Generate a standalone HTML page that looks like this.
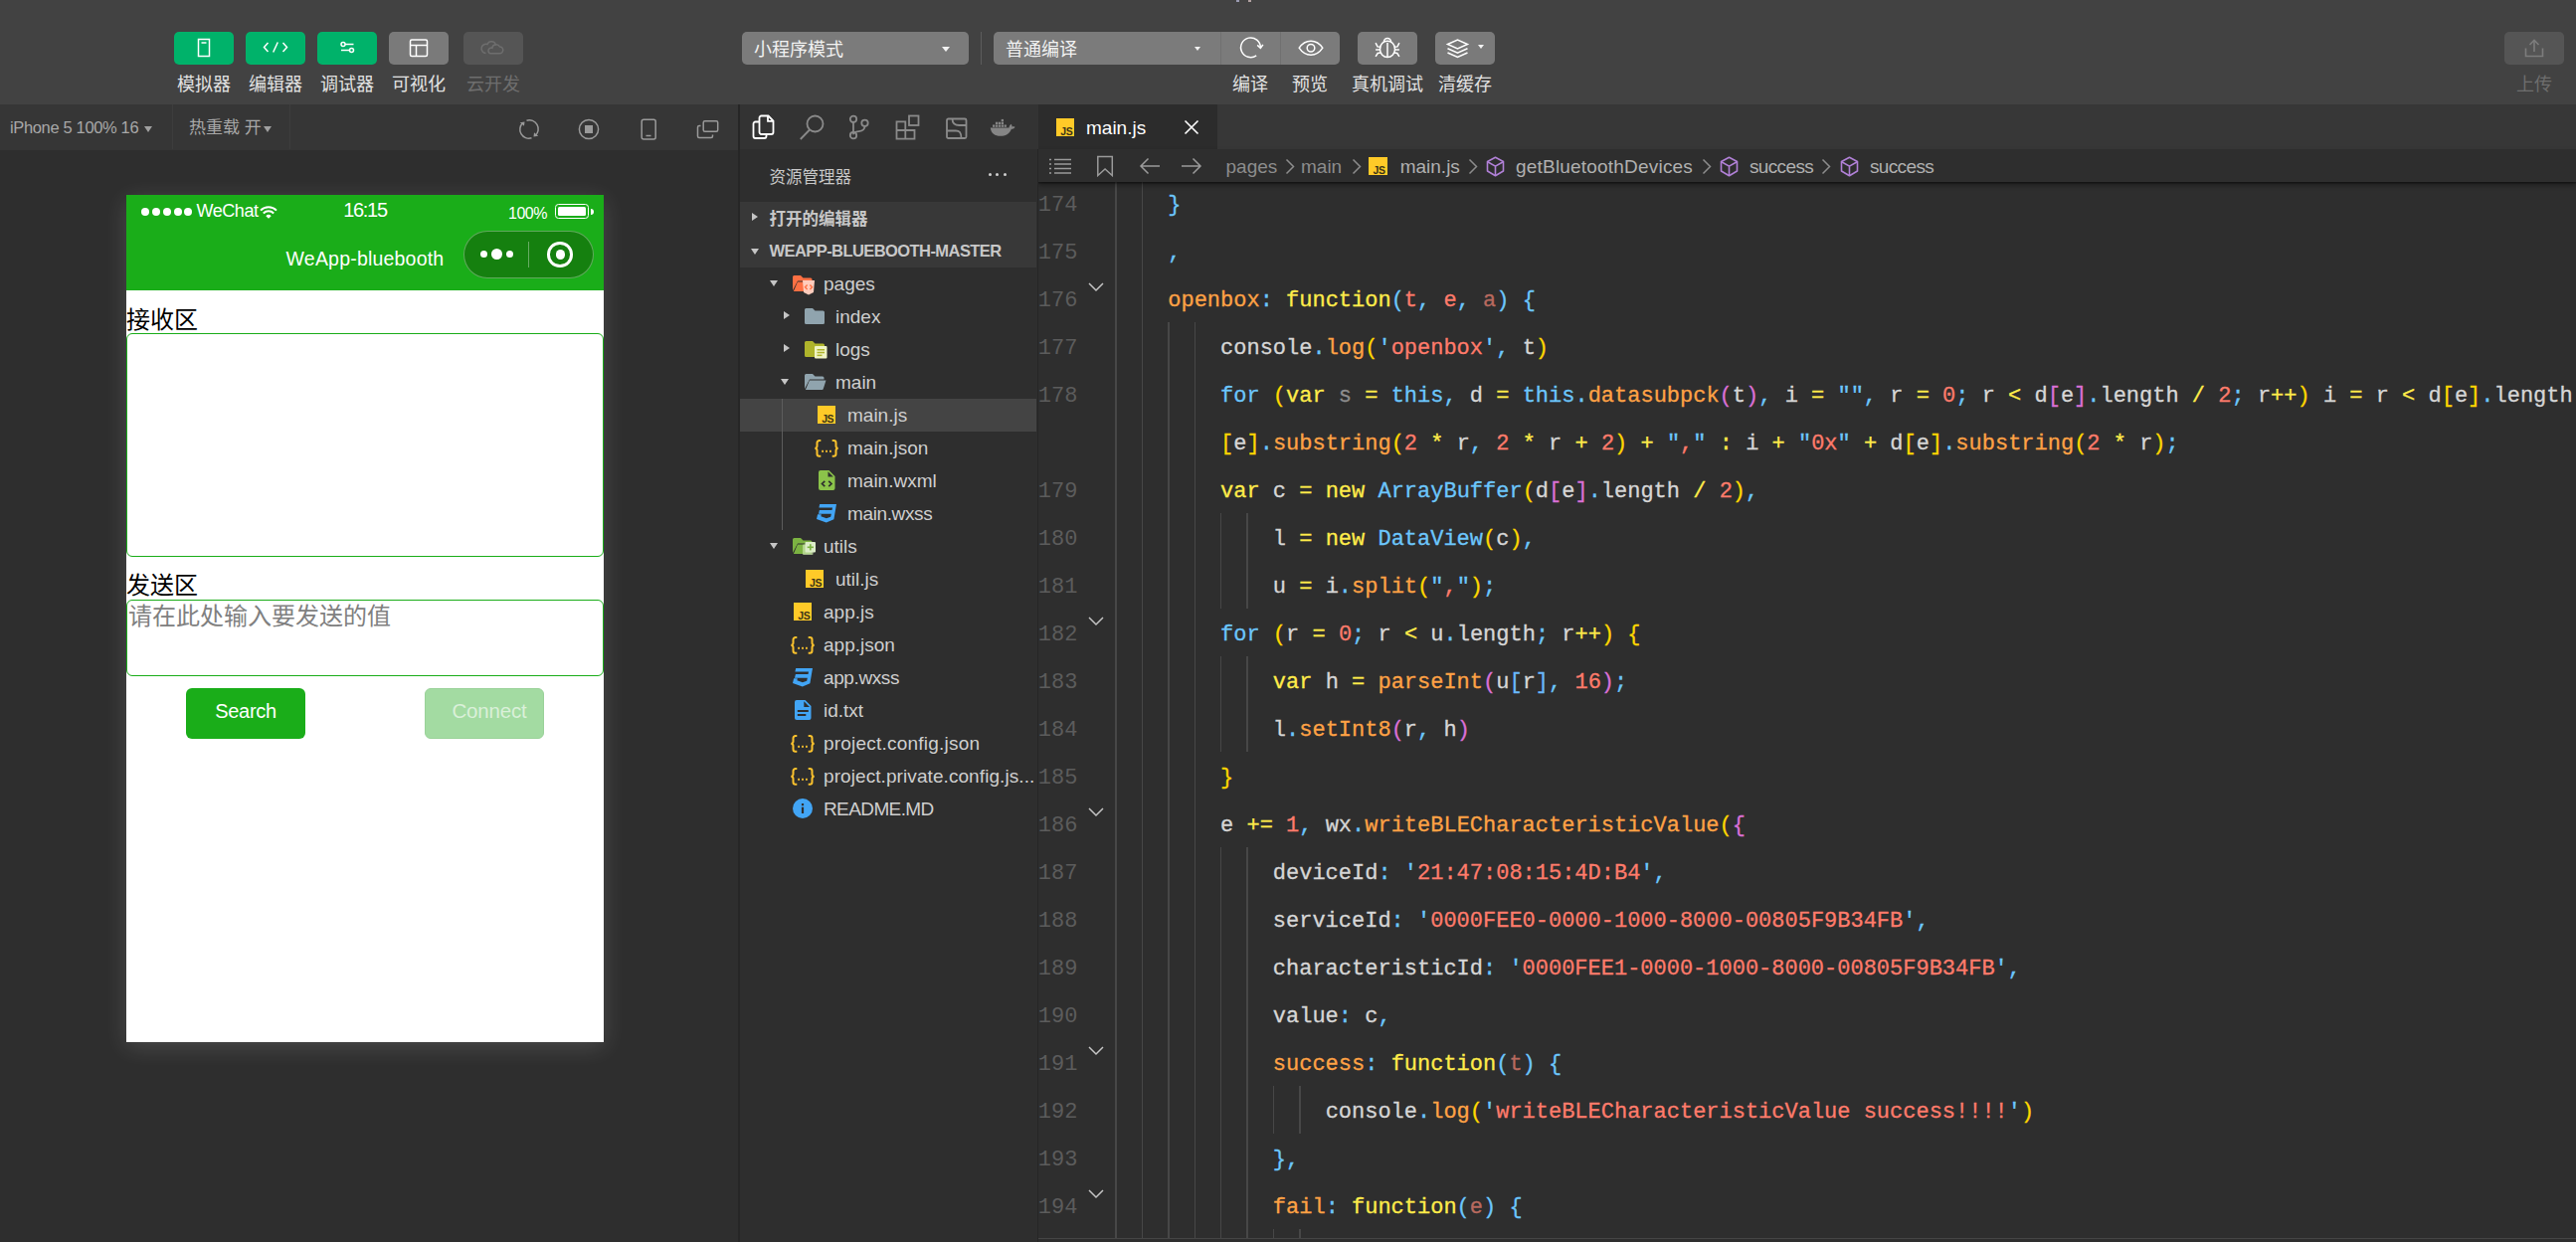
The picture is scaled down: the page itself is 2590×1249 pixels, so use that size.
<!DOCTYPE html>
<html lang="zh-CN"><head><meta charset="utf-8"><title>main.js</title>
<style>
*{box-sizing:border-box;margin:0;padding:0}
html,body{width:2590px;height:1249px;overflow:hidden;background:#2e2e2e}
body{position:relative;font-family:"Liberation Sans","Noto Sans CJK SC",sans-serif;color:#ccc}
.abs{position:absolute}
#tb{position:absolute;left:0;top:0;width:2590px;height:105px;background:#424242}
.tbtn{position:absolute;top:32px;width:60px;height:33px;border-radius:5px;background:#00b26a}
.tbtn.gray{background:#7a7a7a}
.tbtn.dis{background:#555}
.tbtn svg{position:absolute;left:0;top:0}
.tlab{position:absolute;top:69.5px;height:30px;line-height:30px;font-size:18px;color:#e2e2e2;text-align:center;white-space:nowrap;transform:translateX(-50%)}
.tlab.dis{color:#6e6e6e}
.sel{position:absolute;top:32px;height:33px;background:#7b7b7b;border-radius:5px;font-size:18px;line-height:37px;color:#f2f2f2;padding-left:12px;white-space:nowrap}
.tri{position:absolute;width:0;height:0;border-left:4px solid transparent;border-right:4px solid transparent;border-top:5px solid #f2f2f2}
#sim{position:absolute;left:0;top:105px;width:742px;height:1144px;background:#2e2e2e;overflow:hidden}
#simbar{position:absolute;left:0;top:0;width:742px;height:45.5px;background:#363636}
#simbar .t{position:absolute;top:1px;height:45px;line-height:45px;color:#a8a8a8;white-space:nowrap}
.gtri{position:absolute;width:0;height:0;border-left:4.5px solid transparent;border-right:4.5px solid transparent;border-top:6px solid #a0a0a0}
#phone{position:absolute;left:127px;top:91px;width:480px;height:852px;background:#fff;box-shadow:0 5px 22px rgba(255,255,255,.14);overflow:hidden;color:#000}
#phead{position:absolute;left:0;top:0;width:480px;height:96px;background:#1aad19;color:#fff}
#vdiv{position:absolute;left:742px;top:105px;width:1.5px;height:1144px;background:#262626}
#act{position:absolute;left:743.5px;top:105px;width:300.5px;height:45px;background:#333}
#exp{position:absolute;left:743.5px;top:150px;width:299.6px;height:1099px;background:#2e2e2e;overflow:hidden}
#expb{position:absolute;left:1043.1px;top:150px;width:.9px;height:1099px;background:#262626}
.hdr{position:absolute;left:0;width:298.7px;height:33px;background:#383838;font-weight:bold;font-size:16.5px;line-height:33px;color:#c8c8c8;padding-left:30px;white-space:nowrap}
.row{position:absolute;left:0;width:298.7px;height:33px;line-height:33px;font-size:19px;color:#cfcfcf;white-space:nowrap}
.row.sel2{background:#444}
.row span{position:absolute;top:0}
.row svg{position:absolute}
.wtri-d{position:absolute;width:0;height:0;border-left:4.7px solid transparent;border-right:4.7px solid transparent;border-top:6.5px solid #c5c5c5;margin-left:.3px}
.wtri-r{position:absolute;width:0;height:0;border-top:4.7px solid transparent;border-bottom:4.7px solid transparent;border-left:6.5px solid #c5c5c5;margin:.3px 0 0 .3px}
#ed{position:absolute;left:1044px;top:105px;width:1546px;height:1144px;background:#2e2e2e;overflow:hidden}
#tabs{position:absolute;left:0;top:0;width:1546px;height:45px;background:#373737}
#tab{position:absolute;left:0;top:0;width:180px;height:45px;background:#2c2c2c;color:#fff;font-size:19px;line-height:45px}
#bc{position:absolute;left:0;top:45px;width:1546px;height:33px;background:#2e2e2e;box-shadow:0 1.5px 0 rgba(0,0,0,.3),0 3px 5px rgba(0,0,0,.4);z-index:3;font-size:19px;line-height:33px;color:#8c8c8c;white-space:nowrap}
#bc span{position:absolute;top:.6px}
#bc svg{position:absolute}
#code{position:absolute;left:0;top:77.8px;-webkit-text-stroke:.3px currentColor;width:1546px;height:1080px;font-family:"Liberation Mono",monospace;font-size:22px;line-height:48px;white-space:pre;color:#d6d6d6;letter-spacing:-0.007px}
.ln{position:absolute;left:-.2px;-webkit-text-stroke:0;width:39.6px;text-align:right;color:#5c5c5c;height:48px}
.cl{position:absolute;left:77.5px;height:48px}
.ig{position:absolute;width:1.5px;background:#474747}
.fold{position:absolute;left:50px}
.b{color:#6cc6fc}.o{color:#ffa245}.y{color:#ffec4a}.r{color:#ff7b6b}.w{color:#d6d6d6}.d{color:#8e8e8e}.g{color:#ffd700}.m{color:#da70d6}.u{color:#6ab8fb}.f{color:#b8695e}
</style></head>
<body>
<div id="tb">
<div class="abs" style="left:1243px;top:0;width:3px;height:2px;background:#9a9ab0"></div><div class="abs" style="left:1255px;top:0;width:3px;height:2px;background:#b0a0a0"></div>
<div class="tbtn" style="left:175px"><svg width="60" height="33" viewBox="0 0 60 33"><rect x="24.5" y="7.5" width="11" height="17" stroke="#fff" fill="none" stroke-width="1.5"/><line x1="27.5" y1="11" x2="32.5" y2="11" stroke="#fff" fill="none" stroke-width="1.5"/></svg></div>
<div class="tlab" style="left:205px">模拟器</div>
<div class="tbtn" style="left:247px"><svg width="60" height="33" viewBox="0 0 60 33"><polyline points="22.5,11 18.5,15.5 22.5,20" stroke="#fff" fill="none" stroke-width="1.5"/><polyline points="37.5,11 41.5,15.5 37.5,20" stroke="#fff" fill="none" stroke-width="1.5"/><line x1="32.3" y1="10.5" x2="27.7" y2="20.5" stroke="#fff" fill="none" stroke-width="1.5"/></svg></div>
<div class="tlab" style="left:277px">编辑器</div>
<div class="tbtn" style="left:319px"><svg width="60" height="33" viewBox="0 0 60 33"><circle cx="26" cy="12.5" r="2" stroke="#fff" fill="none" stroke-width="1.5"/><line x1="28" y1="12.5" x2="36.5" y2="12.5" stroke="#fff" fill="none" stroke-width="1.5"/><circle cx="34.5" cy="18.5" r="2" stroke="#fff" fill="none" stroke-width="1.5"/><line x1="24" y1="18.5" x2="32.5" y2="18.5" stroke="#fff" fill="none" stroke-width="1.5"/></svg></div>
<div class="tlab" style="left:349px">调试器</div>
<div class="tbtn gray" style="left:391px"><svg width="60" height="33" viewBox="0 0 60 33"><rect x="21.5" y="8" width="17" height="16.5" rx="1.5" stroke="#fff" fill="none" stroke-width="1.5"/><line x1="21.5" y1="13.5" x2="38.5" y2="13.5" stroke="#fff" fill="none" stroke-width="1.5"/><line x1="27.5" y1="13.5" x2="27.5" y2="24.5" stroke="#fff" fill="none" stroke-width="1.5"/></svg></div>
<div class="tlab" style="left:421px">可视化</div>
<div class="tbtn dis" style="left:466px"><svg width="60" height="33" viewBox="0 0 60 33"><path d="M22.5 21.5a4.6 4.6 0 1 1 1.5-9 4.4 4.4 0 0 1 8.5 1.3" stroke="#6e6e6e" fill="none" stroke-width="1.5"/><path d="M27 21.8h9.2a3.4 3.4 0 0 0 .3-6.8 4 4 0 0 0-7.6 1.2 2.9 2.9 0 0 0-1.9 5.6z" stroke="#6e6e6e" fill="none" stroke-width="1.5"/></svg></div>
<div class="tlab dis" style="left:496px">云开发</div>
<div class="sel" style="left:746px;width:228px">小程序模式<i class="tri" style="left:201px;top:15px"></i></div>
<div class="abs" style="left:985.5px;top:32px;width:1px;height:33px;background:#5c5c5c"></div>
<div class="sel" style="left:999px;width:348px">普通编译<i class="tri" style="left:201.5px;top:15px;border-left-width:3.5px;border-right-width:3.5px;border-top-width:4.5px"></i><i class="abs" style="left:228px;top:0;width:1px;height:33px;background:#707070"></i><i class="abs" style="left:288px;top:0;width:1px;height:33px;background:#707070"></i><svg class="abs" style="left:228px;top:0" width="60" height="33" viewBox="0 0 60 33"><path d="M36.2 23.9A9.9 9.9 0 1 1 40.4 15.75" stroke="#fff" fill="none" stroke-width="1.5"/><polyline points="37.2,13.4 40.4,16.3 42.9,12.9" stroke="#fff" fill="none" stroke-width="1.5"/></svg><svg class="abs" style="left:288px;top:0" width="60" height="33" viewBox="0 0 60 33"><path d="M19.2 16.2c3-4.6 7.2-7 11.8-7s8.8 2.4 11.8 7c-3 4.6-7.2 7-11.8 7s-8.8-2.4-11.8-7z" stroke="#fff" fill="none" stroke-width="1.5"/><circle cx="31" cy="16.2" r="3.8" stroke="#fff" fill="none" stroke-width="1.5"/></svg></div>
<div class="tbtn gray" style="left:1365px"><svg width="60" height="33" viewBox="0 0 60 33"><path d="M30 9.3c-4.2 0-7.5 3.3-7.5 8.1 0 4.6 3.3 8.1 7.5 8.1s7.5-3.5 7.5-8.1c0-4.8-3.3-8.1-7.5-8.1z" stroke="#fff" fill="none" stroke-width="1.5"/><path d="M26.4 10.3a3.6 3.9 0 0 1 7.2 0" stroke="#fff" fill="none" stroke-width="1.5"/><line x1="30" y1="11" x2="30" y2="25.5" stroke="#fff" fill="none" stroke-width="1.5"/><polyline points="18.1,11.1 20,14.9 22.7,15.3" stroke="#fff" fill="none" stroke-width="1.5"/><polyline points="41.9,11.1 40,14.9 37.3,15.3" stroke="#fff" fill="none" stroke-width="1.5"/><line x1="18.1" y1="18" x2="22.5" y2="18" stroke="#fff" fill="none" stroke-width="1.5"/><line x1="37.5" y1="18" x2="41.9" y2="18" stroke="#fff" fill="none" stroke-width="1.5"/><polyline points="18.1,24.9 20.2,21.5 23,21.1" stroke="#fff" fill="none" stroke-width="1.5"/><polyline points="41.9,24.9 39.8,21.5 37,21.1" stroke="#fff" fill="none" stroke-width="1.5"/></svg></div>
<div class="tbtn gray" style="left:1443px"><svg width="60" height="33" viewBox="0 0 60 33"><path d="M12.5 12.5l10-4.5 10 4.5-10 4.5z" stroke="#fff" fill="none" stroke-width="1.5"/><polyline points="12.5,16.8 22.5,21.3 32.5,16.8" stroke="#fff" fill="none" stroke-width="1.5"/><polyline points="12.5,21 22.5,25.5 32.5,21" stroke="#fff" fill="none" stroke-width="1.5"/></svg><i class="tri" style="left:42.5px;top:13px;border-left-width:3.5px;border-right-width:3.5px;border-top-width:4.5px"></i></div>
<div class="tlab" style="left:1257px">编译</div>
<div class="tlab" style="left:1317px">预览</div>
<div class="tlab" style="left:1395px">真机调试</div>
<div class="tlab" style="left:1473px">清缓存</div>
<div class="tbtn dis" style="left:2518px"><svg width="60" height="33" viewBox="0 0 60 33"><polyline points="21.5,16.5 21.5,24.5 38.5,24.5 38.5,16.5" stroke="#7d7d7d" fill="none" stroke-width="1.6"/><line x1="30" y1="9" x2="30" y2="20" stroke="#7d7d7d" stroke-width="1.6"/><polyline points="25.5,13 30,8.5 34.5,13" stroke="#7d7d7d" fill="none" stroke-width="1.6"/></svg></div>
<div class="tlab dis" style="left:2548px">上传</div>
</div>
<div id="sim"><div id="simbar">
<div class="t" style="left:10px;font-size:16.5px;letter-spacing:-.35px">iPhone 5 100% 16</div><i class="gtri" style="left:145px;top:22px"></i>
<i class="abs" style="left:172.5px;top:0;width:1px;height:45px;background:#3d3d3d"></i><i class="abs" style="left:291px;top:0;width:1px;height:45px;background:#3d3d3d"></i>
<div class="t" style="left:190px;top:1.3px;font-size:17px">热重载 开</div><i class="gtri" style="left:265px;top:22px"></i>
<svg class="abs" style="left:518px;top:11px" width="28" height="28" viewBox="0 0 28 28"><g transform="rotate(-90 14 14)"><path d="M5.2 16.5A9 9 0 0 1 20.5 7.8" stroke="#9a9a9a" fill="none" stroke-width="1.5"/><path d="M22.8 11.5A9 9 0 0 1 7.5 20.2" stroke="#9a9a9a" fill="none" stroke-width="1.5"/><polygon points="20.8,4.8 21.6,9.5 17.2,9" fill="#9a9a9a"/><polygon points="7.2,23.2 6.4,18.5 10.8,19" fill="#9a9a9a"/></g></svg>
<svg class="abs" style="left:578px;top:11px" width="28" height="28" viewBox="0 0 28 28"><circle cx="14" cy="14" r="9.6" stroke="#9a9a9a" fill="none" stroke-width="1.5"/><rect x="10" y="10" width="8" height="8" fill="#9a9a9a"/></svg>
<svg class="abs" style="left:638px;top:11px" width="28" height="28" viewBox="0 0 28 28"><rect x="7.2" y="4.2" width="14" height="19.8" rx="2" stroke="#9a9a9a" fill="none" stroke-width="1.5"/><line x1="11.5" y1="20.5" x2="16.5" y2="20.5" stroke="#9a9a9a" fill="none" stroke-width="1.5"/></svg>
<svg class="abs" style="left:698px;top:11px" width="28" height="28" viewBox="0 0 28 28"><rect x="9.2" y="5.8" width="14.5" height="10.5" rx="1.5" stroke="#9a9a9a" fill="none" stroke-width="1.5"/><path d="M6.5 10.5h-1.5a1.5 1.5 0 0 0-1.5 1.5v9a1.5 1.5 0 0 0 1.5 1.5h12a1.5 1.5 0 0 0 1.5-1.5v-1.5" stroke="#9a9a9a" fill="none" stroke-width="1.5"/></svg>
</div>
<div id="phone"><div id="phead">
<i class="abs" style="left:15px;top:13.2px;width:8px;height:8px;border-radius:50%;background:#fff"></i>
<i class="abs" style="left:26px;top:13.2px;width:8px;height:8px;border-radius:50%;background:#fff"></i>
<i class="abs" style="left:36.8px;top:13.2px;width:8px;height:8px;border-radius:50%;background:#fff"></i>
<i class="abs" style="left:47.5px;top:13.2px;width:8px;height:8px;border-radius:50%;background:#fff"></i>
<i class="abs" style="left:58.2px;top:13.2px;width:8px;height:8px;border-radius:50%;background:#fff"></i>
<div class="abs" style="left:70.5px;top:4.2px;font-size:18px;line-height:24px;letter-spacing:-.45px">WeChat</div>
<svg class="abs" style="left:134px;top:11px" width="18" height="13" viewBox="0 0 18 13"><path d="M1 4.6a11.3 11.3 0 0 1 16 0" stroke="#fff" stroke-width="2" fill="none"/><path d="M3.8 7.5a7.3 7.3 0 0 1 10.4 0" stroke="#fff" stroke-width="2" fill="none"/><path d="M6.3 10.2a3.8 3.8 0 0 1 5.4 0L9 12.8z" fill="#fff"/></svg>
<div class="abs" style="left:140px;width:200px;text-align:center;top:2.3px;font-size:20px;line-height:26px;letter-spacing:-1.3px">16:15</div>
<div class="abs" style="left:384px;top:6.8px;font-size:16px;line-height:24px;letter-spacing:-.5px">100%</div>
<i class="abs" style="left:431px;top:9px;width:34px;height:15.2px;border:1.5px solid #fff;border-radius:3.5px"></i><i class="abs" style="left:434px;top:12.2px;width:28px;height:8.8px;background:#fff;border-radius:1.5px"></i><i class="abs" style="left:467px;top:14px;width:3px;height:6.2px;background:#fff;border-radius:0 3px 3px 0"></i>
<div class="abs" style="left:0;width:480px;text-align:center;top:48.9px;font-size:19.5px;line-height:30px;letter-spacing:.2px">WeApp-bluebooth</div>
<div class="abs" style="left:339.2px;top:36.2px;width:130.8px;height:47.6px;border-radius:24px;background:#15800f;border:1px solid rgba(255,255,255,.32)"></div>
<i class="abs" style="left:355.9px;top:56px;width:7.4px;height:7.4px;border-radius:50%;background:#fff"></i><i class="abs" style="left:367px;top:54.2px;width:11px;height:11px;border-radius:50%;background:#fff"></i><i class="abs" style="left:381.7px;top:56px;width:7.4px;height:7.4px;border-radius:50%;background:#fff"></i>
<i class="abs" style="left:404px;top:47px;width:1px;height:26px;background:rgba(255,255,255,.35)"></i>
<i class="abs" style="left:423.4px;top:47.2px;width:25.6px;height:25.6px;border-radius:50%;border:3.1px solid #fff"></i><i class="abs" style="left:431.6px;top:55.4px;width:9.2px;height:9.2px;border-radius:50%;background:#fff"></i>
</div>
<div class="abs" style="left:0;top:109.6px;font-size:24px;line-height:32px;font-family:'Liberation Sans','Noto Sans CJK SC',sans-serif">接收区</div>
<div class="abs" style="left:0;top:139.2px;width:480px;height:225px;border:1.5px solid #1aad19;border-radius:6px"></div>
<div class="abs" style="left:0;top:377.2px;font-size:24px;line-height:32px">发送区</div>
<div class="abs" style="left:0;top:407px;width:480px;height:76.5px;border:1.5px solid #1aad19;border-radius:6px"></div>
<div class="abs" style="left:2px;top:408px;font-size:24px;line-height:32px;color:#808080">请在此处输入要发送的值</div>
<div class="abs" style="left:60px;top:496px;width:120px;height:51px;border-radius:6px;background:#1aad19;color:#fff;font-size:20px;line-height:47px;text-align:center;letter-spacing:-.3px">Search</div>
<div class="abs" style="left:300px;top:496px;width:120px;height:51px;border-radius:6px;background:#a3dba2;border:1px solid #9ad299;color:#daf0d9;font-size:20.5px;line-height:43px;text-align:center;padding-left:10px;letter-spacing:-.2px">Connect</div>
</div>
</div><div id="vdiv"></div>
<div id="act">
<svg class="abs" style="left:11px;top:9px" width="26" height="28" viewBox="0 0 26 28"><path d="M8.5 8.5v-4a2 2 0 0 1 2-2h7l5 5v11.5a2 2 0 0 1-2 2h-10a2 2 0 0 1-2-2z" stroke="#fff" fill="none" stroke-width="1.8"/><path d="M17 2.8v5h5" stroke="#fff" fill="none" stroke-width="1.8"/><path d="M8.5 8.5h-4a2 2 0 0 0-2 2v12.5a2 2 0 0 0 2 2h9a2 2 0 0 0 2-2v-2" stroke="#fff" fill="none" stroke-width="1.8"/></svg>
<svg class="abs" style="left:59px;top:9px" width="28" height="28" viewBox="0 0 28 28"><circle cx="16.5" cy="10.5" r="8" stroke="#8a8a8a" fill="none" stroke-width="1.8"/><line x1="11" y1="16.5" x2="1.8" y2="26" stroke="#8a8a8a" fill="none" stroke-width="1.8"/></svg>
<svg class="abs" style="left:108px;top:9px" width="24" height="28" viewBox="0 0 24 28"><circle cx="6" cy="5.8" r="3.2" stroke="#8a8a8a" fill="none" stroke-width="1.8"/><circle cx="6" cy="22.2" r="3.2" stroke="#8a8a8a" fill="none" stroke-width="1.8"/><circle cx="17.5" cy="9.8" r="3.2" stroke="#8a8a8a" fill="none" stroke-width="1.8"/><line x1="6" y1="9" x2="6" y2="19" stroke="#8a8a8a" fill="none" stroke-width="1.8"/><path d="M17.5 13c0 4-3 4.8-6 5.2-3 .4-5.5 1-5.5 3" stroke="#8a8a8a" fill="none" stroke-width="1.8"/></svg>
<svg class="abs" style="left:155px;top:9px" width="28" height="28" viewBox="0 0 28 28"><path d="M2.5 8.3h8.8v17.4h-8.8zM2.5 17h18v8.7h-9.2M11.3 17h9.2v8.7" stroke="#8a8a8a" fill="none" stroke-width="1.8"/><rect x="15" y="2.5" width="9.5" height="9.5" stroke="#8a8a8a" fill="none" stroke-width="1.8"/></svg>
<svg class="abs" style="left:205px;top:11px" width="26" height="26" viewBox="0 0 26 26"><rect x="3" y="3.5" width="19.5" height="19.5" rx="1.5" stroke="#8a8a8a" fill="none" stroke-width="1.8"/><path d="M8.5 3.5c0 5 2.5 6.5 7 6.5h7" stroke="#8a8a8a" fill="none" stroke-width="1.8"/><path d="M3 15.5h9c4 0 5.5 2 5.5 7.5" stroke="#8a8a8a" fill="none" stroke-width="1.8"/></svg>
<svg class="abs" style="left:251px;top:14px" width="26" height="20" viewBox="0 0 26 20"><path d="M.8 9.5h18.7c.3-2.2 1.5-3.3 2.1-3.8.8.9 1 2 .9 2.8 1-.3 2.2-.2 3 .3-.6 1.4-2 2-3.6 2-1.9 5.2-6.2 7-11 7-5.6 0-9.4-2.5-10.1-8.3z" fill="#858585"/><g fill="#858585"><rect x="3" y="6.5" width="2.3" height="2.3"/><rect x="5.9" y="6.5" width="2.3" height="2.3"/><rect x="8.8" y="6.5" width="2.3" height="2.3"/><rect x="11.7" y="6.5" width="2.3" height="2.3"/><rect x="14.6" y="6.5" width="2.3" height="2.3"/><rect x="5.9" y="3.7" width="2.3" height="2.3"/><rect x="8.8" y="3.7" width="2.3" height="2.3"/><rect x="11.7" y="3.7" width="2.3" height="2.3"/><rect x="11.7" y=".9" width="2.3" height="2.3"/></g></svg>
</div>
<div id="exp">
<div class="abs" style="left:30px;top:12.7px;font-size:16.5px;line-height:30px;color:#c8c8c8">资源管理器</div>
<i class="abs" style="left:250.3px;top:24.4px;width:3px;height:3px;border-radius:50%;background:#d0d0d0"></i>
<i class="abs" style="left:257.9px;top:24.4px;width:3px;height:3px;border-radius:50%;background:#d0d0d0"></i>
<i class="abs" style="left:265.5px;top:24.4px;width:3px;height:3px;border-radius:50%;background:#d0d0d0"></i>
<div class="hdr" style="top:52.5px"><i class="wtri-r" style="left:12px;top:11.5px"></i><span style="position:relative;top:1.5px">打开的编辑器</span></div>
<div class="hdr" style="top:85.5px;letter-spacing:-.57px"><i class="wtri-d" style="left:11px;top:14px"></i><span style="position:relative;top:.900px">WEAPP-BLUEBOOTH-MASTER</span></div>
<i class="abs" style="left:42.3px;top:250.5px;width:1.5px;height:132.5px;background:#5c5c5c;z-index:2"></i>
<div class="row" style="top:118.5px"><i class="wtri-d" style="left:30px;top:13.5px"></i><svg class="abs" style="left:53.5px;top:8.5px" width="22" height="17" viewBox="0 0 22 17"><path d="M1.5 0h6.5l2.5 2.5h7.5a1.5 1.5 0 0 1 1.5 1.5v1.5h-14.5l-5 9.5v-13.5a1.5 1.5 0 0 1 1.5-1.5z" fill="#ff7043"/><path d="M4.9 6.5h16.6l-2.8 8.7a1.2 1.2 0 0 1-1.1.8h-16.7z" fill="#ff7043"/></svg><svg class="abs" style="left:63.5px;top:13.5px" width="12" height="15" viewBox="0 0 12 15"><path d="M0 0h12l-1 12-5 2.5-5-2.5z" fill="#ffccbc"/><polyline points="4.6,4.5 2.5,6.8 4.6,9.1" stroke="#ff7043" stroke-width="1.4" fill="none"/><polyline points="7.4,4.5 9.5,6.8 7.4,9.1" stroke="#ff7043" stroke-width="1.4" fill="none"/></svg><span style="left:84.5px">pages</span></div>
<div class="row" style="top:151.5px"><i class="wtri-r" style="left:44.7px;top:11.5px"></i><svg class="abs" style="left:65.5px;top:8.5px" width="22" height="17" viewBox="0 0 22 17"><path d="M1.5 0h6.5l2.5 2.5h8a1.5 1.5 0 0 1 1.5 1.5v10.5a1.5 1.5 0 0 1-1.5 1.5h-17a1.5 1.5 0 0 1-1.5-1.5v-13a1.5 1.5 0 0 1 1.5-1.5z" fill="#90a4ae"/></svg><span style="left:96.5px">index</span></div>
<div class="row" style="top:184.5px"><i class="wtri-r" style="left:44.7px;top:11.5px"></i><svg class="abs" style="left:65.5px;top:8.5px" width="22" height="17" viewBox="0 0 22 17"><path d="M1.5 0h6.5l2.5 2.5h8a1.5 1.5 0 0 1 1.5 1.5v10.5a1.5 1.5 0 0 1-1.5 1.5h-17a1.5 1.5 0 0 1-1.5-1.5v-13a1.5 1.5 0 0 1 1.5-1.5z" fill="#afb42b"/></svg><svg class="abs" style="left:75.2px;top:13.5px" width="13" height="13" viewBox="0 0 13 13"><rect width="12.5" height="12.5" rx="1" fill="#f0f4c3"/><rect x="2.5" y="3" width="7.5" height="1.5" fill="#afb42b"/><rect x="2.5" y="5.8" width="7.5" height="1.5" fill="#afb42b"/><rect x="2.5" y="8.6" width="5" height="1.5" fill="#afb42b"/></svg><span style="left:96.5px">logs</span></div>
<div class="row" style="top:217.5px"><i class="wtri-d" style="left:41.7px;top:13.5px"></i><svg class="abs" style="left:65.5px;top:8.5px" width="22" height="17" viewBox="0 0 22 17"><path d="M1.5 0h6.5l2.5 2.5h7.5a1.5 1.5 0 0 1 1.5 1.5v1.5h-14.5l-5 9.5v-13.5a1.5 1.5 0 0 1 1.5-1.5z" fill="#90a4ae"/><path d="M4.9 6.5h16.6l-2.8 8.7a1.2 1.2 0 0 1-1.1.8h-16.7z" fill="#90a4ae"/></svg><span style="left:96.5px">main</span></div>
<div class="row sel2" style="top:250.5px"><i class="abs" style="left:78.39999999999998px;top:7.5px;width:18.3px;height:18.2px;background:#ffca28"></i><b class="abs" style="left:82.7px;top:14.9px;font-size:10.5px;line-height:12px;color:#3b3417;font-weight:bold;letter-spacing:-.5px;font-family:'Liberation Sans',sans-serif">JS</b><span style="left:108.5px">main.js</span></div>
<div class="row" style="top:283.5px"><svg class="abs" style="left:75.5px;top:8px" width="24" height="18" viewBox="0 0 24 18"><path d="M6.3 1h-1.5a2.3 2.3 0 0 0-2.3 2.3v3.2a2.2 2.2 0 0 1-2.2 2.3 2.2 2.2 0 0 1 2.2 2.3v3.4a2.3 2.3 0 0 0 2.3 2.3h1.5" stroke="#fbc22d" stroke-width="2" fill="none"/><path d="M17.7 1h1.5a2.3 2.3 0 0 1 2.3 2.3v3.2a2.2 2.2 0 0 0 2.2 2.3 2.2 2.2 0 0 0-2.2 2.3v3.4a2.3 2.3 0 0 1-2.3 2.3h-1.5" stroke="#fbc22d" stroke-width="2" fill="none"/><rect x="7.2" y="10.8" width="1.8" height="2" fill="#fbc22d"/><rect x="11.1" y="10.8" width="1.8" height="2" fill="#fbc22d"/><rect x="15" y="10.8" width="1.8" height="2" fill="#fbc22d"/></svg><span style="left:108.5px">main.json</span></div>
<div class="row" style="top:316.5px"><svg class="abs" style="left:79.29999999999995px;top:6.5px" width="17" height="20" viewBox="0 0 17 20"><path d="M2 0h8.5l6 6v12a2 2 0 0 1-2 2h-12.5a2 2 0 0 1-2-2v-16a2 2 0 0 1 2-2z" fill="#8bc34a"/><path d="M9.5 1.2l5.3 5.3h-5.3z" fill="#2e2e2e"/><polyline points="6.3,10.8 3.5,13.5 6.3,16.2" stroke="#2e2e2e" stroke-width="1.7" fill="none"/><polyline points="10.2,10.8 13,13.5 10.2,16.2" stroke="#2e2e2e" stroke-width="1.7" fill="none"/></svg><span style="left:108.5px">main.wxml</span></div>
<div class="row" style="top:349.5px"><svg class="abs" style="left:77.5px;top:7.3px" width="20" height="19" viewBox="0 0 20 19"><path d="M3.2 0h16.8l-2.6 15.2-7.6 3.3-9.8-3.5 1.1-4.7h3.7l-.4 2 5.5 2 4.3-1.6.6-3h-12.8l.9-3.6h12.6l.5-2.5h-13.6z" fill="#42a5f5"/></svg><span style="left:108.5px;letter-spacing:-0.38px">main.wxss</span></div>
<div class="row" style="top:382.5px"><i class="wtri-d" style="left:30px;top:13.5px"></i><svg class="abs" style="left:53.5px;top:8.5px" width="22" height="17" viewBox="0 0 22 17"><path d="M1.5 0h6.5l2.5 2.5h7.5a1.5 1.5 0 0 1 1.5 1.5v1.5h-14.5l-5 9.5v-13.5a1.5 1.5 0 0 1 1.5-1.5z" fill="#7cb342"/><path d="M4.9 6.5h16.6l-2.8 8.7a1.2 1.2 0 0 1-1.1.8h-16.7z" fill="#7cb342"/></svg><svg class="abs" style="left:63px;top:12.5px" width="14" height="14" viewBox="0 0 14 14"><rect x="0" y="2.5" width="10.5" height="10.5" rx="1" fill="#c5e1a5" opacity=".75"/><rect x="2.5" y="0" width="10.5" height="10.5" rx="1" fill="#dcedc8"/><rect x="7" y="2.2" width="1.6" height="6.2" fill="#7cb342"/><rect x="4.7" y="4.5" width="6.2" height="1.6" fill="#7cb342"/></svg><span style="left:84.5px">utils</span></div>
<div class="row" style="top:415.5px"><i class="abs" style="left:66.29999999999995px;top:7.5px;width:18.3px;height:18.2px;background:#ffca28"></i><b class="abs" style="left:70.6px;top:14.9px;font-size:10.5px;line-height:12px;color:#3b3417;font-weight:bold;letter-spacing:-.5px;font-family:'Liberation Sans',sans-serif">JS</b><span style="left:96.5px">util.js</span></div>
<div class="row" style="top:448.5px"><i class="abs" style="left:54.5px;top:7.5px;width:18.3px;height:18.2px;background:#ffca28"></i><b class="abs" style="left:58.8px;top:14.9px;font-size:10.5px;line-height:12px;color:#3b3417;font-weight:bold;letter-spacing:-.5px;font-family:'Liberation Sans',sans-serif">JS</b><span style="left:84.5px">app.js</span></div>
<div class="row" style="top:481.5px"><svg class="abs" style="left:51.5px;top:8px" width="24" height="18" viewBox="0 0 24 18"><path d="M6.3 1h-1.5a2.3 2.3 0 0 0-2.3 2.3v3.2a2.2 2.2 0 0 1-2.2 2.3 2.2 2.2 0 0 1 2.2 2.3v3.4a2.3 2.3 0 0 0 2.3 2.3h1.5" stroke="#fbc22d" stroke-width="2" fill="none"/><path d="M17.7 1h1.5a2.3 2.3 0 0 1 2.3 2.3v3.2a2.2 2.2 0 0 0 2.2 2.3 2.2 2.2 0 0 0-2.2 2.3v3.4a2.3 2.3 0 0 1-2.3 2.3h-1.5" stroke="#fbc22d" stroke-width="2" fill="none"/><rect x="7.2" y="10.8" width="1.8" height="2" fill="#fbc22d"/><rect x="11.1" y="10.8" width="1.8" height="2" fill="#fbc22d"/><rect x="15" y="10.8" width="1.8" height="2" fill="#fbc22d"/></svg><span style="left:84.5px">app.json</span></div>
<div class="row" style="top:514.5px"><svg class="abs" style="left:53.5px;top:7.3px" width="20" height="19" viewBox="0 0 20 19"><path d="M3.2 0h16.8l-2.6 15.2-7.6 3.3-9.8-3.5 1.1-4.7h3.7l-.4 2 5.5 2 4.3-1.6.6-3h-12.8l.9-3.6h12.6l.5-2.5h-13.6z" fill="#42a5f5"/></svg><span style="left:84.5px;letter-spacing:-0.39px">app.wxss</span></div>
<div class="row" style="top:547.5px"><svg class="abs" style="left:55.299999999999955px;top:6.5px" width="17" height="20" viewBox="0 0 17 20"><path d="M2 0h8.5l6 6v12a2 2 0 0 1-2 2h-12.5a2 2 0 0 1-2-2v-16a2 2 0 0 1 2-2z" fill="#42a5f5"/><path d="M9.3 1.3l5.7 5.7h-5.7z" fill="#2e2e2e"/><rect x="2.8" y="10" width="11" height="2" fill="#2e2e2e"/><rect x="2.8" y="14" width="8.5" height="2" fill="#2e2e2e"/></svg><span style="left:84.5px">id.txt</span></div>
<div class="row" style="top:580.5px"><svg class="abs" style="left:51.5px;top:8px" width="24" height="18" viewBox="0 0 24 18"><path d="M6.3 1h-1.5a2.3 2.3 0 0 0-2.3 2.3v3.2a2.2 2.2 0 0 1-2.2 2.3 2.2 2.2 0 0 1 2.2 2.3v3.4a2.3 2.3 0 0 0 2.3 2.3h1.5" stroke="#fbc22d" stroke-width="2" fill="none"/><path d="M17.7 1h1.5a2.3 2.3 0 0 1 2.3 2.3v3.2a2.2 2.2 0 0 0 2.2 2.3 2.2 2.2 0 0 0-2.2 2.3v3.4a2.3 2.3 0 0 1-2.3 2.3h-1.5" stroke="#fbc22d" stroke-width="2" fill="none"/><rect x="7.2" y="10.8" width="1.8" height="2" fill="#fbc22d"/><rect x="11.1" y="10.8" width="1.8" height="2" fill="#fbc22d"/><rect x="15" y="10.8" width="1.8" height="2" fill="#fbc22d"/></svg><span style="left:84.5px;letter-spacing:0.22px">project.config.json</span></div>
<div class="row" style="top:613.5px"><svg class="abs" style="left:51.5px;top:8px" width="24" height="18" viewBox="0 0 24 18"><path d="M6.3 1h-1.5a2.3 2.3 0 0 0-2.3 2.3v3.2a2.2 2.2 0 0 1-2.2 2.3 2.2 2.2 0 0 1 2.2 2.3v3.4a2.3 2.3 0 0 0 2.3 2.3h1.5" stroke="#fbc22d" stroke-width="2" fill="none"/><path d="M17.7 1h1.5a2.3 2.3 0 0 1 2.3 2.3v3.2a2.2 2.2 0 0 0 2.2 2.3 2.2 2.2 0 0 0-2.2 2.3v3.4a2.3 2.3 0 0 1-2.3 2.3h-1.5" stroke="#fbc22d" stroke-width="2" fill="none"/><rect x="7.2" y="10.8" width="1.8" height="2" fill="#fbc22d"/><rect x="11.1" y="10.8" width="1.8" height="2" fill="#fbc22d"/><rect x="15" y="10.8" width="1.8" height="2" fill="#fbc22d"/></svg><span style="left:84.5px;letter-spacing:0.08px">project.private.config.js...</span></div>
<div class="row" style="top:646.5px"><svg class="abs" style="left:53.5px;top:6.5px" width="20" height="20" viewBox="0 0 20 20"><circle cx="10" cy="10" r="10" fill="#42a5f5"/><rect x="8.9" y="8.7" width="2.2" height="6.3" fill="#2e2e2e"/><rect x="8.9" y="5" width="2.2" height="2.2" fill="#2e2e2e"/></svg><span style="left:84.5px;letter-spacing:-0.6px">README.MD</span></div>
</div><div id="expb"></div>
<div id="ed">
<div id="tabs"><div id="tab"><i class="abs" style="left:18px;top:14px;width:18.3px;height:18.2px;background:#ffca28"></i><b class="abs" style="left:22.3px;top:21.4px;font-size:10.5px;line-height:12px;color:#3b3417;font-weight:bold;letter-spacing:-.5px">JS</b><span class="abs" style="left:48px;top:1px">main.js</span><svg class="abs" style="left:146px;top:15px" width="16" height="16" viewBox="0 0 16 16"><path d="M1.5 1.5l13 13M14.5 1.5l-13 13" stroke="#fff" stroke-width="1.6"/></svg></div></div>
<div id="bc">
<svg class="abs" style="left:10px;top:8px" width="24" height="18" viewBox="0 0 24 18"><line x1="1" y1="2.5" x2="3" y2="2.5" stroke="#9a9a9a" fill="none" stroke-width="1.5"/><line x1="6" y1="2.5" x2="23" y2="2.5" stroke="#9a9a9a" fill="none" stroke-width="1.5"/><line x1="1" y1="7" x2="3" y2="7" stroke="#9a9a9a" fill="none" stroke-width="1.5"/><line x1="6" y1="7" x2="23" y2="7" stroke="#9a9a9a" fill="none" stroke-width="1.5"/><line x1="1" y1="11.5" x2="3" y2="11.5" stroke="#9a9a9a" fill="none" stroke-width="1.5"/><line x1="6" y1="11.5" x2="23" y2="11.5" stroke="#9a9a9a" fill="none" stroke-width="1.5"/><line x1="1" y1="16" x2="3" y2="16" stroke="#9a9a9a" fill="none" stroke-width="1.5"/><line x1="6" y1="16" x2="23" y2="16" stroke="#9a9a9a" fill="none" stroke-width="1.5"/></svg>
<svg class="abs" style="left:58px;top:5.5px" width="18" height="22" viewBox="0 0 18 22"><path d="M1.8 1.5h14.5v19l-7.25-6.5-7.25 6.5z" stroke="#9a9a9a" fill="none" stroke-width="1.5" stroke-width="1.8"/></svg>
<svg class="abs" style="left:101px;top:8px" width="22" height="18" viewBox="0 0 22 18"><path d="M9.5 1.5l-7.5 7.5 7.5 7.5M2 9h19" stroke="#9a9a9a" fill="none" stroke-width="1.5"/></svg>
<svg class="abs" style="left:143px;top:8px" width="22" height="18" viewBox="0 0 22 18"><path d="M12.5 1.5l7.5 7.5-7.5 7.5M20 9h-19" stroke="#9a9a9a" fill="none" stroke-width="1.5"/></svg>
<span style="left:188.5px">pages</span><svg class="abs" style="left:248px;top:8.5px" width="10" height="17" viewBox="0 0 10 17"><path d="M1.5 1.5l7 7-7 7" stroke="#8c8c8c" fill="none" stroke-width="1.5"/></svg><span style="left:264px">main</span><svg class="abs" style="left:315px;top:8.5px" width="10" height="17" viewBox="0 0 10 17"><path d="M1.5 1.5l7 7-7 7" stroke="#8c8c8c" fill="none" stroke-width="1.5"/></svg>
<i class="abs" style="left:332.3px;top:7.5px;width:18.3px;height:18.2px;background:#ffca28"></i><b class="abs" style="left:336.6px;top:14.9px;font-size:10.5px;line-height:12px;color:#3b3417;font-weight:bold;letter-spacing:-.5px">JS</b>
<span style="left:363.7px;color:#b0b0b0">main.js</span><svg class="abs" style="left:431.5px;top:8.5px" width="10" height="17" viewBox="0 0 10 17"><path d="M1.5 1.5l7 7-7 7" stroke="#8c8c8c" fill="none" stroke-width="1.5"/></svg><svg class="abs" style="left:450px;top:6.5px" width="19" height="21" viewBox="0 0 19 21"><path d="M9.5 1.2l8 4.3v9.5l-8 4.7-8-4.7v-9.5z" stroke="#b180d7" fill="none" stroke-width="1.6" stroke-linejoin="round"/><path d="M1.7 5.7l7.8 4.5 7.8-4.5M9.5 10.2v9.3" stroke="#b180d7" fill="none" stroke-width="1.6"/></svg><span style="left:480px;color:#b0b0b0;letter-spacing:.2px">getBluetoothDevices</span><svg class="abs" style="left:666.5px;top:8.5px" width="10" height="17" viewBox="0 0 10 17"><path d="M1.5 1.5l7 7-7 7" stroke="#8c8c8c" fill="none" stroke-width="1.5"/></svg><svg class="abs" style="left:684.5px;top:6.5px" width="19" height="21" viewBox="0 0 19 21"><path d="M9.5 1.2l8 4.3v9.5l-8 4.7-8-4.7v-9.5z" stroke="#b180d7" fill="none" stroke-width="1.6" stroke-linejoin="round"/><path d="M1.7 5.7l7.8 4.5 7.8-4.5M9.5 10.2v9.3" stroke="#b180d7" fill="none" stroke-width="1.6"/></svg><span style="left:715px;color:#b0b0b0;letter-spacing:-.65px">success</span><svg class="abs" style="left:787px;top:8.5px" width="10" height="17" viewBox="0 0 10 17"><path d="M1.5 1.5l7 7-7 7" stroke="#8c8c8c" fill="none" stroke-width="1.5"/></svg><svg class="abs" style="left:805.5px;top:6.5px" width="19" height="21" viewBox="0 0 19 21"><path d="M9.5 1.2l8 4.3v9.5l-8 4.7-8-4.7v-9.5z" stroke="#b180d7" fill="none" stroke-width="1.6" stroke-linejoin="round"/><path d="M1.7 5.7l7.8 4.5 7.8-4.5M9.5 10.2v9.3" stroke="#b180d7" fill="none" stroke-width="1.6"/></svg><span style="left:836px;color:#b0b0b0;letter-spacing:-.65px">success</span>
</div>
<div id="code">
<div class="ln" style="top:0px">174</div>
<div class="cl" style="top:0px">    <span class="b">}</span></div>
<i class="ig" style="left:77.3px;top:-2.7px;height:48px"></i>
<i class="ig" style="left:103.7px;top:-2.7px;height:48px"></i>
<div class="ln" style="top:48px">175</div>
<div class="cl" style="top:48px">    <span class="b">,</span></div>
<i class="ig" style="left:77.3px;top:45.3px;height:48px"></i>
<i class="ig" style="left:103.7px;top:45.3px;height:48px"></i>
<div class="ln" style="top:96px">176</div>
<svg class="fold" style="top:101px" width="17" height="10" viewBox="0 0 17 10"><path d="M1 1l7 7 7-7" stroke="#c5c5c5" fill="none" stroke-width="1.5"/></svg>
<div class="cl" style="top:96px">    <span class="o">openbox</span><span class="b">:</span> <span class="y">function</span><span class="b">(</span><span class="r">t</span><span class="b">,</span> <span class="r">e</span><span class="b">,</span> <span class="f">a</span><span class="b">)</span> <span class="b">{</span></div>
<i class="ig" style="left:77.3px;top:93.3px;height:48px"></i>
<i class="ig" style="left:103.7px;top:93.3px;height:48px"></i>
<div class="ln" style="top:144px">177</div>
<div class="cl" style="top:144px">        <span class="w">console</span><span class="b">.</span><span class="o">log</span><span class="g">(</span><span class="b">'</span><span class="r">openbox</span><span class="b">'</span><span class="b">,</span> <span class="w">t</span><span class="g">)</span></div>
<i class="ig" style="left:77.3px;top:141.3px;height:48px"></i>
<i class="ig" style="left:103.7px;top:141.3px;height:48px"></i>
<i class="ig" style="left:130.1px;top:141.3px;height:48px"></i>
<i class="ig" style="left:156.5px;top:141.3px;height:48px"></i>
<div class="ln" style="top:192px">178</div>
<div class="cl" style="top:192px">        <span class="b">for</span> <span class="g">(</span><span class="y">var</span> <span class="d">s</span> <span class="y">=</span> <span class="b">this</span><span class="b">,</span> <span class="w">d</span> <span class="y">=</span> <span class="b">this</span><span class="b">.</span><span class="o">datasubpck</span><span class="m">(</span><span class="w">t</span><span class="m">)</span><span class="b">,</span> <span class="w">i</span> <span class="y">=</span> <span class="b">""</span><span class="b">,</span> <span class="w">r</span> <span class="y">=</span> <span class="r">0</span><span class="b">;</span> <span class="w">r</span> <span class="y">&lt;</span> <span class="w">d</span><span class="m">[</span><span class="w">e</span><span class="m">]</span><span class="b">.</span><span class="w">length</span> <span class="y">/</span> <span class="r">2</span><span class="b">;</span> <span class="w">r</span><span class="y">++</span><span class="g">)</span> <span class="w">i</span> <span class="y">=</span> <span class="w">r</span> <span class="y">&lt;</span> <span class="w">d</span><span class="g">[</span><span class="w">e</span><span class="g">]</span><span class="b">.</span><span class="w">length</span></div>
<i class="ig" style="left:77.3px;top:189.3px;height:48px"></i>
<i class="ig" style="left:103.7px;top:189.3px;height:48px"></i>
<i class="ig" style="left:130.1px;top:189.3px;height:48px"></i>
<i class="ig" style="left:156.5px;top:189.3px;height:48px"></i>
<div class="cl" style="top:240px">        <span class="g">[</span><span class="w">e</span><span class="g">]</span><span class="b">.</span><span class="o">substring</span><span class="g">(</span><span class="r">2</span> <span class="y">*</span> <span class="w">r</span><span class="b">,</span> <span class="r">2</span> <span class="y">*</span> <span class="w">r</span> <span class="y">+</span> <span class="r">2</span><span class="g">)</span> <span class="y">+</span> <span class="b">"</span><span class="r">,</span><span class="b">"</span> <span class="y">:</span> <span class="w">i</span> <span class="y">+</span> <span class="b">"</span><span class="r">0x</span><span class="b">"</span> <span class="y">+</span> <span class="w">d</span><span class="g">[</span><span class="w">e</span><span class="g">]</span><span class="b">.</span><span class="o">substring</span><span class="g">(</span><span class="r">2</span> <span class="y">*</span> <span class="w">r</span><span class="g">)</span><span class="b">;</span></div>
<i class="ig" style="left:77.3px;top:237.3px;height:48px"></i>
<i class="ig" style="left:103.7px;top:237.3px;height:48px"></i>
<i class="ig" style="left:130.1px;top:237.3px;height:48px"></i>
<i class="ig" style="left:156.5px;top:237.3px;height:48px"></i>
<div class="ln" style="top:288px">179</div>
<div class="cl" style="top:288px">        <span class="y">var</span> <span class="w">c</span> <span class="y">=</span> <span class="y">new</span> <span class="b">ArrayBuffer</span><span class="g">(</span><span class="w">d</span><span class="m">[</span><span class="w">e</span><span class="m">]</span><span class="b">.</span><span class="w">length</span> <span class="y">/</span> <span class="r">2</span><span class="g">)</span><span class="b">,</span></div>
<i class="ig" style="left:77.3px;top:285.3px;height:48px"></i>
<i class="ig" style="left:103.7px;top:285.3px;height:48px"></i>
<i class="ig" style="left:130.1px;top:285.3px;height:48px"></i>
<i class="ig" style="left:156.5px;top:285.3px;height:48px"></i>
<div class="ln" style="top:336px">180</div>
<div class="cl" style="top:336px">            <span class="w">l</span> <span class="y">=</span> <span class="y">new</span> <span class="b">DataView</span><span class="g">(</span><span class="w">c</span><span class="g">)</span><span class="b">,</span></div>
<i class="ig" style="left:77.3px;top:333.3px;height:48px"></i>
<i class="ig" style="left:103.7px;top:333.3px;height:48px"></i>
<i class="ig" style="left:130.1px;top:333.3px;height:48px"></i>
<i class="ig" style="left:156.5px;top:333.3px;height:48px"></i>
<i class="ig" style="left:182.9px;top:333.3px;height:48px"></i>
<i class="ig" style="left:209.2px;top:333.3px;height:48px"></i>
<div class="ln" style="top:384px">181</div>
<div class="cl" style="top:384px">            <span class="w">u</span> <span class="y">=</span> <span class="w">i</span><span class="b">.</span><span class="o">split</span><span class="g">(</span><span class="b">"</span><span class="r">,</span><span class="b">"</span><span class="g">)</span><span class="b">;</span></div>
<i class="ig" style="left:77.3px;top:381.3px;height:48px"></i>
<i class="ig" style="left:103.7px;top:381.3px;height:48px"></i>
<i class="ig" style="left:130.1px;top:381.3px;height:48px"></i>
<i class="ig" style="left:156.5px;top:381.3px;height:48px"></i>
<i class="ig" style="left:182.9px;top:381.3px;height:48px"></i>
<i class="ig" style="left:209.2px;top:381.3px;height:48px"></i>
<div class="ln" style="top:432px">182</div>
<svg class="fold" style="top:437px" width="17" height="10" viewBox="0 0 17 10"><path d="M1 1l7 7 7-7" stroke="#c5c5c5" fill="none" stroke-width="1.5"/></svg>
<div class="cl" style="top:432px">        <span class="b">for</span> <span class="g">(</span><span class="w">r</span> <span class="y">=</span> <span class="r">0</span><span class="b">;</span> <span class="w">r</span> <span class="y">&lt;</span> <span class="w">u</span><span class="b">.</span><span class="w">length</span><span class="b">;</span> <span class="w">r</span><span class="y">++</span><span class="g">)</span> <span class="g">{</span></div>
<i class="ig" style="left:77.3px;top:429.3px;height:48px"></i>
<i class="ig" style="left:103.7px;top:429.3px;height:48px"></i>
<i class="ig" style="left:130.1px;top:429.3px;height:48px"></i>
<i class="ig" style="left:156.5px;top:429.3px;height:48px"></i>
<div class="ln" style="top:480px">183</div>
<div class="cl" style="top:480px">            <span class="y">var</span> <span class="w">h</span> <span class="y">=</span> <span class="o">parseInt</span><span class="m">(</span><span class="w">u</span><span class="u">[</span><span class="w">r</span><span class="u">]</span><span class="b">,</span> <span class="r">16</span><span class="m">)</span><span class="b">;</span></div>
<i class="ig" style="left:77.3px;top:477.3px;height:48px"></i>
<i class="ig" style="left:103.7px;top:477.3px;height:48px"></i>
<i class="ig" style="left:130.1px;top:477.3px;height:48px"></i>
<i class="ig" style="left:156.5px;top:477.3px;height:48px"></i>
<i class="ig" style="left:182.9px;top:477.3px;height:48px"></i>
<i class="ig" style="left:209.2px;top:477.3px;height:48px"></i>
<div class="ln" style="top:528px">184</div>
<div class="cl" style="top:528px">            <span class="w">l</span><span class="b">.</span><span class="o">setInt8</span><span class="m">(</span><span class="w">r</span><span class="b">,</span> <span class="w">h</span><span class="m">)</span></div>
<i class="ig" style="left:77.3px;top:525.3px;height:48px"></i>
<i class="ig" style="left:103.7px;top:525.3px;height:48px"></i>
<i class="ig" style="left:130.1px;top:525.3px;height:48px"></i>
<i class="ig" style="left:156.5px;top:525.3px;height:48px"></i>
<i class="ig" style="left:182.9px;top:525.3px;height:48px"></i>
<i class="ig" style="left:209.2px;top:525.3px;height:48px"></i>
<div class="ln" style="top:576px">185</div>
<div class="cl" style="top:576px">        <span class="g">}</span></div>
<i class="ig" style="left:77.3px;top:573.3px;height:48px"></i>
<i class="ig" style="left:103.7px;top:573.3px;height:48px"></i>
<i class="ig" style="left:130.1px;top:573.3px;height:48px"></i>
<i class="ig" style="left:156.5px;top:573.3px;height:48px"></i>
<div class="ln" style="top:624px">186</div>
<svg class="fold" style="top:629px" width="17" height="10" viewBox="0 0 17 10"><path d="M1 1l7 7 7-7" stroke="#c5c5c5" fill="none" stroke-width="1.5"/></svg>
<div class="cl" style="top:624px">        <span class="w">e</span> <span class="y">+=</span> <span class="r">1</span><span class="b">,</span> <span class="w">wx</span><span class="b">.</span><span class="o">writeBLECharacteristicValue</span><span class="g">(</span><span class="m">{</span></div>
<i class="ig" style="left:77.3px;top:621.3px;height:48px"></i>
<i class="ig" style="left:103.7px;top:621.3px;height:48px"></i>
<i class="ig" style="left:130.1px;top:621.3px;height:48px"></i>
<i class="ig" style="left:156.5px;top:621.3px;height:48px"></i>
<div class="ln" style="top:672px">187</div>
<div class="cl" style="top:672px">            <span class="w">deviceId</span><span class="b">:</span> <span class="b">'</span><span class="r">21:47:08:15:4D:B4</span><span class="b">'</span><span class="b">,</span></div>
<i class="ig" style="left:77.3px;top:669.3px;height:48px"></i>
<i class="ig" style="left:103.7px;top:669.3px;height:48px"></i>
<i class="ig" style="left:130.1px;top:669.3px;height:48px"></i>
<i class="ig" style="left:156.5px;top:669.3px;height:48px"></i>
<i class="ig" style="left:182.9px;top:669.3px;height:48px"></i>
<i class="ig" style="left:209.2px;top:669.3px;height:48px"></i>
<div class="ln" style="top:720px">188</div>
<div class="cl" style="top:720px">            <span class="w">serviceId</span><span class="b">:</span> <span class="b">'</span><span class="r">0000FEE0-0000-1000-8000-00805F9B34FB</span><span class="b">'</span><span class="b">,</span></div>
<i class="ig" style="left:77.3px;top:717.3px;height:48px"></i>
<i class="ig" style="left:103.7px;top:717.3px;height:48px"></i>
<i class="ig" style="left:130.1px;top:717.3px;height:48px"></i>
<i class="ig" style="left:156.5px;top:717.3px;height:48px"></i>
<i class="ig" style="left:182.9px;top:717.3px;height:48px"></i>
<i class="ig" style="left:209.2px;top:717.3px;height:48px"></i>
<div class="ln" style="top:768px">189</div>
<div class="cl" style="top:768px">            <span class="w">characteristicId</span><span class="b">:</span> <span class="b">'</span><span class="r">0000FEE1-0000-1000-8000-00805F9B34FB</span><span class="b">'</span><span class="b">,</span></div>
<i class="ig" style="left:77.3px;top:765.3px;height:48px"></i>
<i class="ig" style="left:103.7px;top:765.3px;height:48px"></i>
<i class="ig" style="left:130.1px;top:765.3px;height:48px"></i>
<i class="ig" style="left:156.5px;top:765.3px;height:48px"></i>
<i class="ig" style="left:182.9px;top:765.3px;height:48px"></i>
<i class="ig" style="left:209.2px;top:765.3px;height:48px"></i>
<div class="ln" style="top:816px">190</div>
<div class="cl" style="top:816px">            <span class="w">value</span><span class="b">:</span> <span class="w">c</span><span class="b">,</span></div>
<i class="ig" style="left:77.3px;top:813.3px;height:48px"></i>
<i class="ig" style="left:103.7px;top:813.3px;height:48px"></i>
<i class="ig" style="left:130.1px;top:813.3px;height:48px"></i>
<i class="ig" style="left:156.5px;top:813.3px;height:48px"></i>
<i class="ig" style="left:182.9px;top:813.3px;height:48px"></i>
<i class="ig" style="left:209.2px;top:813.3px;height:48px"></i>
<div class="ln" style="top:864px">191</div>
<svg class="fold" style="top:869px" width="17" height="10" viewBox="0 0 17 10"><path d="M1 1l7 7 7-7" stroke="#c5c5c5" fill="none" stroke-width="1.5"/></svg>
<div class="cl" style="top:864px">            <span class="o">success</span><span class="b">:</span> <span class="y">function</span><span class="b">(</span><span class="f">t</span><span class="b">)</span> <span class="b">{</span></div>
<i class="ig" style="left:77.3px;top:861.3px;height:48px"></i>
<i class="ig" style="left:103.7px;top:861.3px;height:48px"></i>
<i class="ig" style="left:130.1px;top:861.3px;height:48px"></i>
<i class="ig" style="left:156.5px;top:861.3px;height:48px"></i>
<i class="ig" style="left:182.9px;top:861.3px;height:48px"></i>
<i class="ig" style="left:209.2px;top:861.3px;height:48px"></i>
<div class="ln" style="top:912px">192</div>
<div class="cl" style="top:912px">                <span class="w">console</span><span class="b">.</span><span class="o">log</span><span class="g">(</span><span class="b">'</span><span class="r">writeBLECharacteristicValue success!!!!</span><span class="b">'</span><span class="g">)</span></div>
<i class="ig" style="left:77.3px;top:909.3px;height:48px"></i>
<i class="ig" style="left:103.7px;top:909.3px;height:48px"></i>
<i class="ig" style="left:130.1px;top:909.3px;height:48px"></i>
<i class="ig" style="left:156.5px;top:909.3px;height:48px"></i>
<i class="ig" style="left:182.9px;top:909.3px;height:48px"></i>
<i class="ig" style="left:209.2px;top:909.3px;height:48px"></i>
<i class="ig" style="left:235.6px;top:909.3px;height:48px"></i>
<i class="ig" style="left:262px;top:909.3px;height:48px"></i>
<div class="ln" style="top:960px">193</div>
<div class="cl" style="top:960px">            <span class="b">}</span><span class="b">,</span></div>
<i class="ig" style="left:77.3px;top:957.3px;height:48px"></i>
<i class="ig" style="left:103.7px;top:957.3px;height:48px"></i>
<i class="ig" style="left:130.1px;top:957.3px;height:48px"></i>
<i class="ig" style="left:156.5px;top:957.3px;height:48px"></i>
<i class="ig" style="left:182.9px;top:957.3px;height:48px"></i>
<i class="ig" style="left:209.2px;top:957.3px;height:48px"></i>
<div class="ln" style="top:1008px">194</div>
<svg class="fold" style="top:1013px" width="17" height="10" viewBox="0 0 17 10"><path d="M1 1l7 7 7-7" stroke="#c5c5c5" fill="none" stroke-width="1.5"/></svg>
<div class="cl" style="top:1008px">            <span class="o">fail</span><span class="b">:</span> <span class="y">function</span><span class="b">(</span><span class="f">e</span><span class="b">)</span> <span class="b">{</span></div>
<i class="ig" style="left:77.3px;top:1005.3px;height:48px"></i>
<i class="ig" style="left:103.7px;top:1005.3px;height:48px"></i>
<i class="ig" style="left:130.1px;top:1005.3px;height:48px"></i>
<i class="ig" style="left:156.5px;top:1005.3px;height:48px"></i>
<i class="ig" style="left:182.9px;top:1005.3px;height:48px"></i>
<i class="ig" style="left:209.2px;top:1005.3px;height:48px"></i>
<div class="ln" style="top:1056px">195</div>
<div class="cl" style="top:1056px">                </div>
<i class="ig" style="left:77.3px;top:1053.3px;height:48px"></i>
<i class="ig" style="left:103.7px;top:1053.3px;height:48px"></i>
<i class="ig" style="left:130.1px;top:1053.3px;height:48px"></i>
<i class="ig" style="left:156.5px;top:1053.3px;height:48px"></i>
<i class="ig" style="left:182.9px;top:1053.3px;height:48px"></i>
<i class="ig" style="left:209.2px;top:1053.3px;height:48px"></i>
<i class="ig" style="left:235.6px;top:1053.3px;height:48px"></i>
<i class="ig" style="left:262px;top:1053.3px;height:48px"></i>
</div>
<div class="abs" style="left:0;top:1139.5px;width:1546px;height:1.5px;background:#454545;z-index:4"></div><div class="abs" style="left:0;top:1141px;width:1546px;height:3px;background:#2e2e2e;z-index:4"></div>
</div>
</body></html>
